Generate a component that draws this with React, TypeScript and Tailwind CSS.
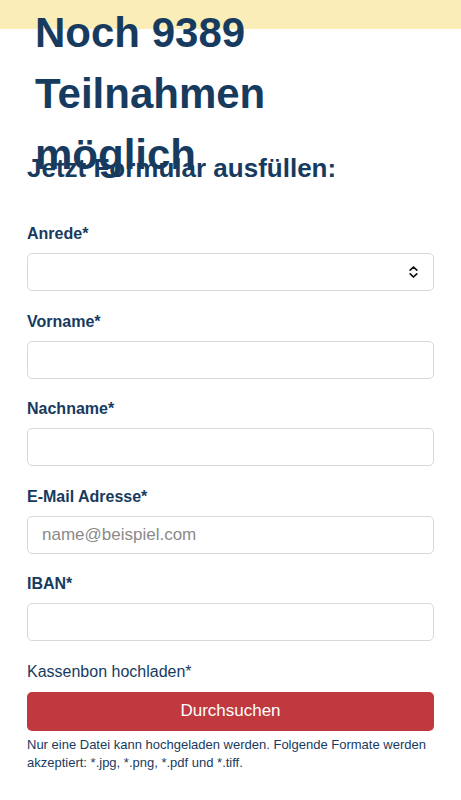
import React from "react";

const navy = "text-[#173b5f]";

function Field({ label, placeholder, select }: { label: string; placeholder?: string; select?: boolean }) {
  return (
    <div className="mb-[18.5px]">
      <div className={`h-[24px] text-[16px] leading-[24px] font-bold ${navy} mb-[7px]`}>{label}</div>
      <div className="relative h-[38px] w-full rounded-[5px] border border-[#d8d8d8] bg-white flex items-center pl-[14px] pr-[15px]">
        {placeholder ? (
          <span className="text-[17px] text-[#8a8a8a]">{placeholder}</span>
        ) : null}
        {select ? (
          <svg className="ml-auto" width="9" height="14" viewBox="0 0 9 14" fill="none">
            <path d="M1.2 5.2 L4.5 2 L7.8 5.2" stroke="#111" strokeWidth="1.7" strokeLinecap="round" strokeLinejoin="round" />
            <path d="M1.2 8.8 L4.5 12 L7.8 8.8" stroke="#111" strokeWidth="1.7" strokeLinecap="round" strokeLinejoin="round" />
          </svg>
        ) : null}
      </div>
    </div>
  );
}

export default function App() {
  return (
    <div className="w-[461px] h-[800px] bg-white overflow-hidden" style={{ fontFamily: '"Liberation Sans", Arial, sans-serif' }}>
      <div className="h-[29px] bg-[#fbedb7]" />
      <div className="relative -mt-[27px] px-[27px]">
        <h1 className={`h-[151px] pl-[8px] w-[400px] text-[42px] leading-[61px] font-bold ${navy}`}>
          Noch 9389 Teilnahmen möglich
        </h1>
        <h2 className={`text-[26px] leading-[31px] font-bold ${navy}`}>Jetzt Formular ausfüllen:</h2>
        <div className="mt-[38px]">
          <Field label="Anrede*" select />
          <Field label="Vorname*" />
          <Field label="Nachname*" />
          <Field label="E-Mail Adresse*" placeholder="name@beispiel.com" />
          <Field label="IBAN*" />
        </div>
        <div className={`-mt-[0px] text-[16px] leading-[24px] ${navy} mt-[1px]`}>Kassenbon hochladen*</div>
        <div className="mt-[8px] h-[39px] w-full rounded-[5px] bg-[#bf393f] flex items-center justify-center text-white text-[17px]">
          Durchsuchen
        </div>
        <p className={`mt-[5px] text-[13px] leading-[18px] ${navy}`}>
          Nur eine Datei kann hochgeladen werden. Folgende Formate werden akzeptiert: *.jpg, *.png, *.pdf und *.tiff.
        </p>
      </div>
    </div>
  );
}
